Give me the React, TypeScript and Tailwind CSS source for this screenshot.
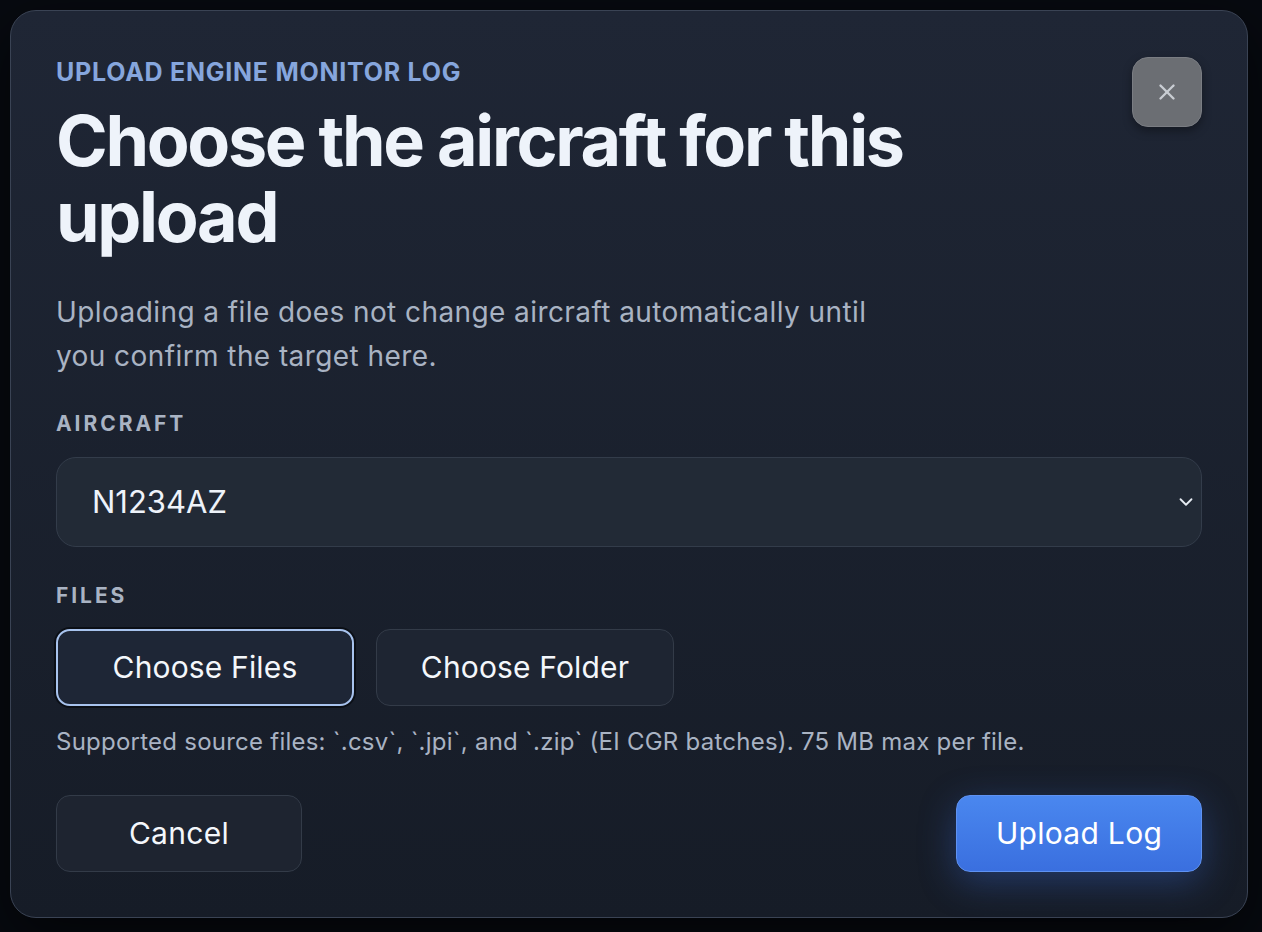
import { ChevronDown, X } from 'lucide-react';

export default function App() {
  return (
    <div
      className="min-h-[932px] w-full bg-[#070a10] p-[10px] pr-[14px]"
      style={{ fontFamily: 'Inter, "Noto Sans", sans-serif' }}
    >
      <div className="relative flex w-[1238px] flex-col rounded-[26px] border border-[#3a4354] bg-gradient-to-b from-[#1f2635] to-[#161c27] px-[45px] pt-[47px] pb-[45px] shadow-[0_20px_60px_rgba(0,0,0,0.6)]">
        <button className="absolute right-[45px] top-[46px] flex h-[70px] w-[70px] items-center justify-center rounded-[16px] border border-[#7a7d83] bg-[#6b6e73] text-[#c9cdd3] shadow-[0_4px_10px_rgba(0,0,0,0.35)]">
          <X className="h-[26px] w-[26px]" strokeWidth={2.2} />
        </button>

        <p className="text-[25px] font-bold leading-[28px] tracking-[0.03em] text-[#86a6dd]">
          UPLOAD ENGINE MONITOR LOG
        </p>

        <h1 className="mt-[17px] max-w-[900px] text-[70px] font-bold leading-[76px] tracking-[-0.033em] text-[#eef3fa]">
          Choose the aircraft for this upload
        </h1>

        <p className="mt-[35px] max-w-[840px] text-[28px] leading-[44px] tracking-[0.015em] text-[#a9b3c3]">
          Uploading a file does not change aircraft automatically until you confirm the target here.
        </p>

        <label className="mt-[32px] text-[21px] font-bold leading-[28px] tracking-[0.14em] text-[#a9b3c3]">
          AIRCRAFT
        </label>
        <div className="mt-[19px] flex h-[90px] items-center justify-between rounded-[20px] border border-[#333c4a] bg-[#222a36] pl-[35px] pr-[4px]">
          <span className="text-[31px] text-[#eef3fa]">N1234AZ</span>
          <ChevronDown className="h-[22px] w-[22px] text-[#e6ebf2]" strokeWidth={2} />
        </div>

        <label className="mt-[35px] text-[21px] font-bold leading-[28px] tracking-[0.14em] text-[#a9b3c3]">
          FILES
        </label>
        <div className="mt-[19px] flex gap-[22px]">
          <button className="flex h-[77px] w-[298px] items-center justify-center rounded-[14px] border-2 border-[#a8c3ee] bg-[#1e2636] text-[30px] tracking-[0.005em] text-[#f4f7fb] shadow-[0_0_0_2px_#0b0f16]">
            Choose Files
          </button>
          <button className="flex h-[77px] w-[298px] items-center justify-center rounded-[14px] border border-[#333b48] bg-[#1e2532] text-[30px] tracking-[0.005em] text-[#f4f7fb]">
            Choose Folder
          </button>
        </div>

        <p className="mt-[21px] text-[24px] leading-[30px] tracking-[0.01em] text-[#a9b3c3]">
          Supported source files: `.csv`, `.jpi`, and `.zip` (EI CGR batches). 75 MB max per file.
        </p>

        <div className="mt-[38px] flex items-center justify-between">
          <button className="flex h-[77px] w-[246px] items-center justify-center rounded-[14px] border border-[#333b48] bg-[#1e2430] text-[30px] tracking-[0.01em] text-[#f4f7fb]">
            Cancel
          </button>
          <button className="flex h-[77px] w-[246px] items-center justify-center rounded-[14px] border border-[#5f92f2] bg-gradient-to-b from-[#4a87ef] to-[#3a6fdf] text-[30px] tracking-[0.01em] text-white shadow-[0_10px_36px_rgba(59,111,224,0.35)]">
            Upload Log
          </button>
        </div>
      </div>
    </div>
  );
}
